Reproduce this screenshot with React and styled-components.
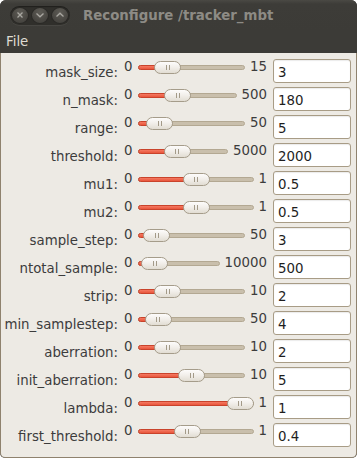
import React from "react";
import styled, { createGlobalStyle } from "styled-components";

const Global = createGlobalStyle`
  html, body { margin: 0; padding: 0; background: #ffffff; }
  body { font-family: "DejaVu Sans", "Liberation Sans", sans-serif; }
  * { box-sizing: border-box; }
`;

const Window = styled.div`
  width: 357px;
  height: 458px;
  display: flex;
  flex-direction: column;
  border-radius: 6px 6px 5px 5px;
  overflow: hidden;
  background: #3c3b37;
`;

const TitleBar = styled.div`
  height: 30px;
  display: flex;
  align-items: center;
  padding-left: 10px;
  background: linear-gradient(#4a4944 0px, #3d3c38 4px, #3c3b37 100%);
`;

const ButtonGroup = styled.div`
  display: flex;
  gap: 2px;
  padding: 0 1px;
  height: 19px;
  align-items: center;
  border-radius: 10px;
  background: #302f2b;
  box-shadow: inset 0 1px 1px rgba(0,0,0,0.35), 0 1px 0 rgba(255,255,255,0.06);
`;

const WinButton = styled.div`
  width: 18px;
  height: 17px;
  border-radius: 50%;
  display: flex;
  align-items: center;
  justify-content: center;
  background: radial-gradient(circle at 50% 30%, #5d5b55 0%, #4a4843 60%, #3f3e3a 100%);
  border: 1px solid #2a2926;
`;

const Title = styled.div`
  margin-left: 13px;
  font-weight: bold;
  font-size: 13.33px;
  color: #8d8b85;
  letter-spacing: 0;
`;

const MenuBar = styled.div`
  height: 23px;
  display: flex;
  align-items: center;
  padding-left: 6px;
  background: #3c3b37;
`;

const MenuItem = styled.div`
  font-size: 13.33px;
  color: #dfdbd2;
`;

const Content = styled.div`
  flex: 1;
  background: #edeae4;
  border: 1px solid #8f826e;
  border-top: none;
  border-radius: 0 0 5px 5px;
  padding: 6px 5px 0 0;
  display: grid;
  grid-template-columns: 117px 1fr 78px;
  grid-auto-rows: 24px;
  row-gap: 4px;
  column-gap: 6px;
  align-content: start;
`;

const Label = styled.div`
  align-self: center;
  text-align: right;
  font-size: 13.33px;
  color: #3c3c3c;
  white-space: nowrap;
  padding-top: 3px;
`;

const SliderArea = styled.div`
  display: flex;
  align-items: flex-start;
  font-size: 13.33px;
  line-height: 15px;
  color: #3c3c3c;
`;

const Bound = styled.span`
  white-space: nowrap;
`;

const Track = styled.div`
  position: relative;
  flex: 1;
  height: 17px;
  margin: 0 5px 0 6px;
`;

const Rail = styled.div`
  position: absolute;
  left: 0;
  right: 0;
  top: 6px;
  height: 5px;
  border-radius: 3px;
  background: #c9bfac;
  border: 1px solid #b3a892;
`;

const Fill = styled.div`
  position: absolute;
  left: 0;
  top: 6px;
  height: 5px;
  border-radius: 3px;
  background: linear-gradient(#f47a62, #e9553b);
  border: 1px solid #c9432b;
`;

const Knob = styled.div`
  position: absolute;
  top: 2px;
  width: 27px;
  height: 13px;
  border-radius: 7px;
  border: 1px solid #a59c8a;
  background: linear-gradient(#fdfcfb 0%, #f1eee9 50%, #e2ddd3 100%);
  display: flex;
  align-items: center;
  justify-content: center;
  gap: 2px;
`;

const Grip = styled.span`
  width: 1px;
  height: 5px;
  background: #a39a88;
`;

const Entry = styled.div`
  height: 24px;
  border: 1px solid #a89c86;
  border-radius: 3px;
  background: #ffffff;
  font-size: 13.33px;
  color: #1e1e1e;
  display: flex;
  align-items: center;
  padding: 3px 0 0 4px;
  box-shadow: inset 0 1px 1px rgba(0,0,0,0.08);
`;

const rows = [
  ["mask_size", 0, 15, "3"],
  ["n_mask", 0, 500, "180"],
  ["range", 0, 50, "5"],
  ["threshold", 0, 5000, "2000"],
  ["mu1", 0, 1, "0.5"],
  ["mu2", 0, 1, "0.5"],
  ["sample_step", 0, 50, "3"],
  ["ntotal_sample", 0, 10000, "500"],
  ["strip", 0, 10, "2"],
  ["min_samplestep", 0, 50, "4"],
  ["aberration", 0, 10, "2"],
  ["init_aberration", 0, 10, "5"],
  ["lambda", 0, 1, "1"],
  ["first_threshold", 0, 1, "0.4"],
];

const CloseIcon = () => (
  <svg width="8" height="8" viewBox="0 0 8 8">
    <path d="M1.5 1.5 L6.5 6.5 M6.5 1.5 L1.5 6.5" stroke="#a9a7a1" strokeWidth="1.3" fill="none" />
  </svg>
);
const DownIcon = () => (
  <svg width="10" height="8" viewBox="0 0 10 8">
    <path d="M1.5 2.5 L5 5.8 L8.5 2.5" stroke="#a9a7a1" strokeWidth="1.3" fill="none" />
  </svg>
);
const UpIcon = () => (
  <svg width="10" height="8" viewBox="0 0 10 8">
    <path d="M1.5 5.5 L5 2.2 L8.5 5.5" stroke="#a9a7a1" strokeWidth="1.3" fill="none" />
  </svg>
);

function Slider({ min, max, value }) {
  const frac = (parseFloat(value) - min) / (max - min);
  const pos = `calc(${frac} * (100% - 27px))`;
  return (
    <SliderArea>
      <Bound>{min}</Bound>
      <Track>
        <Rail />
        <Fill style={{ width: `calc(${frac} * (100% - 27px) + 13px)` }} />
        <Knob style={{ left: pos }}>
          <Grip />
          <Grip />
        </Knob>
      </Track>
      <Bound>{max}</Bound>
    </SliderArea>
  );
}

export default function App() {
  return (
    <>
      <Global />
      <Window>
        <TitleBar>
          <ButtonGroup>
            <WinButton><CloseIcon /></WinButton>
            <WinButton><DownIcon /></WinButton>
            <WinButton><UpIcon /></WinButton>
          </ButtonGroup>
          <Title>Reconfigure /tracker_mbt</Title>
        </TitleBar>
        <MenuBar>
          <MenuItem>File</MenuItem>
        </MenuBar>
        <Content>
          {rows.map(([name, min, max, val]) => (
            <React.Fragment key={name}>
              <Label>{name}:</Label>
              <Slider min={min} max={max} value={val} />
              <Entry>{val}</Entry>
            </React.Fragment>
          ))}
        </Content>
      </Window>
    </>
  );
}
